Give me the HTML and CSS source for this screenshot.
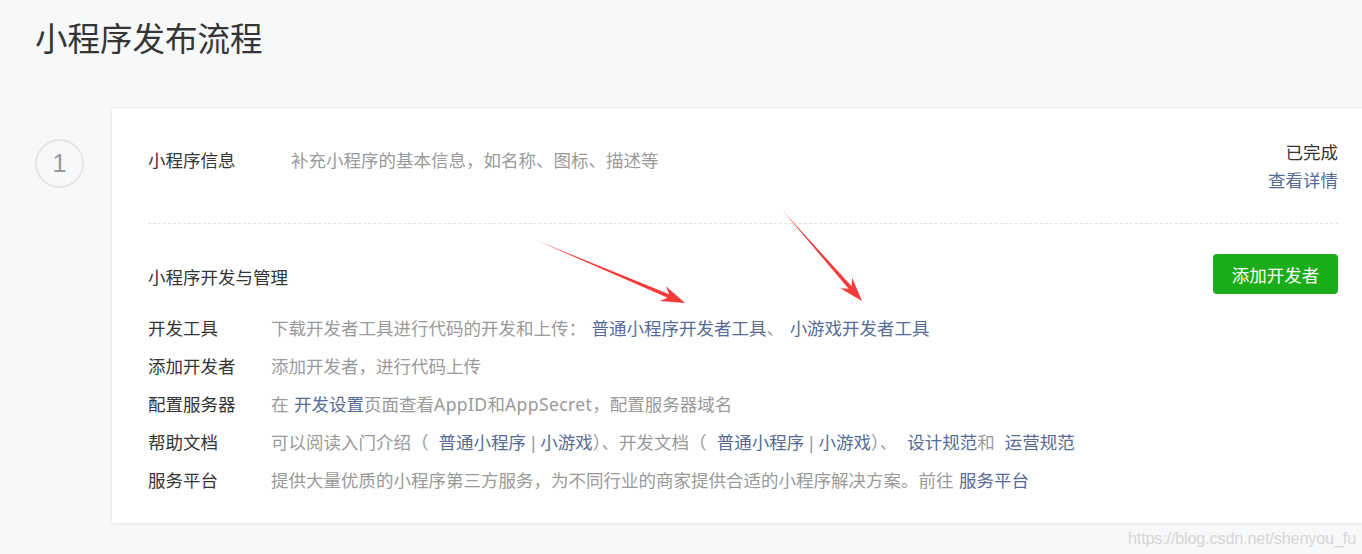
FILE: index.html
```html
<!DOCTYPE html>
<html lang="zh-CN">
<head>
<meta charset="utf-8">
<title>小程序发布流程</title>
<link rel="stylesheet" href="styles.css">
</head>
<body>
<div class="page">
  <header class="head">
    <h1 class="title">小程序发布流程</h1>
  </header>
  <div class="step">
    <div class="step-index"><span class="circle">1</span></div>
    <div class="card">
      <section class="sec sec-info">
        <div class="info-label">小程序信息</div>
        <div class="info-desc">补充小程序的基本信息，如名称、图标、描述等</div>
        <div class="info-status">
          <div class="status">已完成</div>
          <a class="link">查看详情</a>
        </div>
      </section>
      <section class="sec sec-dev">
        <div class="dev-head">
          <div class="dev-title">小程序开发与管理</div>
          <button class="btn">添加开发者</button>
        </div>
        <ul class="rows">
          <li class="row"><span class="row-label">开发工具</span><span class="row-desc">下载开发者工具进行代码的开发和上传： <a class="link">普通小程序开发者工具</a>、 <a class="link">小游戏开发者工具</a></span></li>
          <li class="row"><span class="row-label">添加开发者</span><span class="row-desc">添加开发者，进行代码上传</span></li>
          <li class="row"><span class="row-label">配置服务器</span><span class="row-desc">在 <a class="link">开发设置</a>页面查看<span class="latin">AppID</span>和<span class="latin">AppSecret</span>，配置服务器域名</span></li>
          <li class="row"><span class="row-label">帮助文档</span><span class="row-desc row-help">可以阅读入门介绍（ <a class="link">普通小程序</a><span class="pipe"> | </span><a class="link">小游戏</a>）、开发文档（ <a class="link">普通小程序</a><span class="pipe"> | </span><a class="link">小游戏</a>）、 <a class="link">设计规范</a>和 <a class="link">运营规范</a></span></li>
          <li class="row"><span class="row-label">服务平台</span><span class="row-desc">提供大量优质的小程序第三方服务，为不同行业的商家提供合适的小程序解决方案。前往 <a class="link">服务平台</a></span></li>
        </ul>
      </section>
    </div>
  </div>
  <svg class="arrows" width="1362" height="554" viewBox="0 0 1362 554" aria-hidden="true">
    <polygon points="538,241 669.2,294.2 666,286.3 685,303 659.8,301.1 667.6,297.8" fill="#f43b3b"/>
    <polygon points="783,211 851.6,286.2 852.2,277.7 862,301 840.2,288.3 848.6,288.8" fill="#f43b3b"/>
  </svg>
  <div class="wm">https://blog.csdn.net/shenyou_fu</div>
</div>
</body>
</html>
```
FILE: styles.css
```css
* { box-sizing: border-box; }
html, body { margin: 0; padding: 0; }
body {
  background: #f7f8fa;
  font-family: "Noto Sans", "Noto Sans CJK SC", sans-serif;
  color: #353535;
  width: 1362px;
  height: 554px;
  overflow: hidden;
}
.page { position: relative; width: 1362px; height: 554px; }
.head { padding: 16px 0 0 35px; }
.title {
  margin: 0;
  font-size: 32.5px;
  line-height: 42px;
  font-weight: 400;
  color: #353535;
  font-family: "Noto Sans CJK SC", sans-serif;
}
.step {
  display: flex;
  margin-top: 49px;
}
.step-index {
  width: 111px;
  flex: none;
  padding: 32px 0 0 35px;
}
.circle {
  display: flex;
  align-items: center;
  justify-content: center;
  width: 49px;
  height: 49px;
  border: 2px solid #e5e5e5;
  border-radius: 50%;
  font-size: 25px;
  color: #9a9a9a;
  font-family: "Liberation Sans", "Noto Sans", sans-serif;
}
.card {
  flex: 1;
  background: #fff;
  border: 1px solid #ececec;
  border-right: none;
  box-shadow: 0 1px 2px rgba(0,0,0,0.04);
  padding: 0 24px 0 36px;
  border-radius: 4px 0 0 4px;
}
.sec-info {
  display: flex;
  align-items: flex-start;
  padding: 30px 0 29px;
  border-bottom: 1px dashed #e3e3e3;
  font-size: 17.5px;
}
.info-label {
  width: 143px;
  flex: none;
  line-height: 28px;
  padding-top: 8px;
}
.info-desc {
  flex: 1;
  color: #9a9a9a;
  line-height: 28px;
  padding-top: 8px;
}
.info-status {
  text-align: right;
  line-height: 28px;
}
.status { color: #353535; }
.link { color: #576b95; text-decoration: none; }
.sec-dev { padding: 30px 0 24px; font-size: 17.5px; }
.dev-head {
  display: flex;
  align-items: center;
  justify-content: space-between;
  height: 40px;
}
.dev-title { padding-top: 5px; }
.btn {
  width: 125px;
  height: 40px;
  border: none;
  border-radius: 4px;
  background: #1aad19;
  color: #fff;
  font-family: "Noto Sans CJK SC", "Noto Sans", sans-serif;
  font-size: 17.5px;
  padding: 0;
}
.rows {
  list-style: none;
  margin: 15px 0 0;
  padding: 0;
}
.row {
  display: flex;
  line-height: 38px;
  height: 38px;
  white-space: nowrap;
}
.row-label { width: 123px; flex: none; color: #353535; }
.row-desc { color: #9a9a9a; word-spacing: 1px; }
.row-help { word-spacing: 5.5px; }
.row-help .pipe { word-spacing: 0; font-family: "Liberation Sans", sans-serif; }
.latin { letter-spacing: 0.4px; }
.arrows {
  position: absolute;
  left: 0;
  top: 0;
  pointer-events: none;
}
.wm {
  position: absolute;
  right: 6px;
  bottom: 6px;
  font-family: "Liberation Sans", sans-serif;
  font-size: 16.3px;
  color: #d6d6d6;
  letter-spacing: -0.2px;
}
```
